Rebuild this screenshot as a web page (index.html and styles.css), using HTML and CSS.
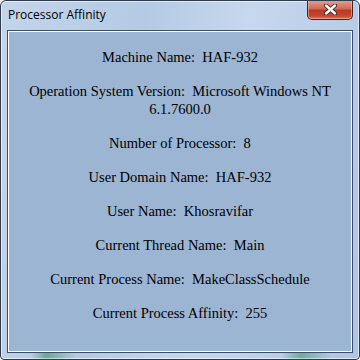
FILE: index.html
```html
<!DOCTYPE html>
<html lang="en">
<head>
<meta charset="UTF-8" />
<title>Processor Affinity</title>
<link rel="stylesheet" href="styles.css">
</head>
<body>

<div class="window">
  <div class="titlebar">
    <span class="title">Processor Affinity</span>
    <button class="close" aria-label="Close">
      <svg width="15" height="11" viewBox="0 0 15 11">
        <path d="M3 1.5 L12 9.5 M12 1.5 L3 9.5" stroke="#3a2320" stroke-width="4.2" stroke-linecap="round" fill="none"/>
        <path d="M3 1.5 L12 9.5 M12 1.5 L3 9.5" stroke="#fff" stroke-width="2.4" stroke-linecap="round" fill="none"/>
      </svg>
    </button>
  </div>

  <div class="client">
    <div class="info">Machine Name:  HAF-932</div>
    <div class="info">Operation System Version:  Microsoft Windows NT<br>6.1.7600.0</div>
    <div class="info">Number of Processor:  8</div>
    <div class="info">User Domain Name:  HAF-932</div>
    <div class="info">User Name:  Khosravifar</div>
    <div class="info">Current Thread Name:  Main</div>
    <div class="info">Current Process Name:  MakeClassSchedule</div>
    <div class="info">Current Process Affinity:  255</div>
  </div>
</div>

</body>
</html>
```

FILE: styles.css
```css
html, body {
  margin: 0;
  padding: 0;
  background: #fff;
}
.window {
  width: 360px;
  height: 360px;
  box-sizing: border-box;
  border: 1px solid #2f3c4e;
  border-radius: 6px 6px 4px 4px;
  background:
    linear-gradient(90deg, transparent 0, transparent 30px, rgba(40,140,80,0.55) 45px, transparent 75px, transparent 280px, rgba(40,140,80,0.5) 300px, transparent 330px) bottom / 100% 7px no-repeat,
    linear-gradient(100deg, #c3d5ea 0%, #b4cae4 35%, #c7d8ed 60%, #aec5e2 100%);
  display: flex;
  flex-direction: column;
  overflow: hidden;
  box-shadow: inset 0 0 0 1px rgba(255,255,255,0.55);
}
.titlebar {
  height: 29px;
  display: flex;
  align-items: flex-start;
  padding-left: 7px;
}
.title {
  font-family: "Open Sans", "Noto Sans", sans-serif;
  font-size: 12px;
  color: #000;
  line-height: 14px;
  margin-top: 7px;
}
.close {
  margin-left: auto;
  margin-right: 6px;
  margin-top: -1px;
  width: 46px;
  height: 20px;
  border: 1px solid #4a2220;
  border-top: none;
  border-radius: 0 0 5px 5px;
  background: linear-gradient(#e8a194 0%, #d26a58 45%, #b73a22 55%, #c8482e 85%, #e07a5a 100%);
  box-shadow: inset 0 0 0 1px rgba(255,200,190,0.5);
  display: flex;
  align-items: center;
  justify-content: center;
  padding: 0;
  cursor: pointer;
}
.client {
  flex: 1;
  margin: 0 6px 6px 6px;
  border: 1px solid #3c4c62;
  box-shadow: inset 0 0 0 1px #fff;
  background: #9cb5d3;
  display: flex;
  flex-direction: column;
  align-items: center;
  gap: 16px;
  padding-top: 17px;
}
.info {
  font-family: "Liberation Serif", "Times New Roman", serif;
  font-size: 14.5px;
  line-height: 18px;
  color: #000;
  text-align: center;
  white-space: pre;
}
```
